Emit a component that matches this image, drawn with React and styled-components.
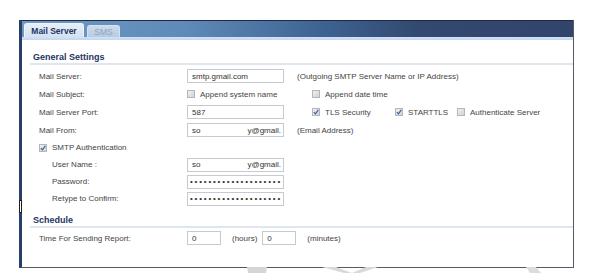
import React from "react";
import styled, { createGlobalStyle } from "styled-components";

const GlobalStyle = createGlobalStyle`
  html, body {
    margin: 0;
    padding: 0;
    background: #ffffff;
  }
  body {
    font-family: "Liberation Sans", Arial, sans-serif;
    font-size: 8px;
    color: #444444;
  }
`;

const Page = styled.div`
  width: 589px;
  height: 273px;
  padding: 20px 0 0 19px;
  box-sizing: border-box;
  position: relative;
  overflow: hidden;
`;

const Panel = styled.div`
  position: relative;
  width: 555px;
  height: 248px;
  box-sizing: border-box;
  border-left: 3px solid #273f69;
  border-right: 1px solid #555b66;
  border-bottom: 1px solid #555b66;
  background: #ffffff;
`;

const Splitter = styled.div`
  position: absolute;
  left: -3px;
  top: 180px;
  width: 1px;
  height: 11px;
  border: 1px solid #1c1c1c;
  background: #ffffff;
`;

const TabBar = styled.div`
  height: 17px;
  box-sizing: border-box;
  border-top: 1px solid #1c2a45;
  background: linear-gradient(90deg, #6f98c4 0%, #5f89b8 30%, #3d6292 55%, #33496f 72%, #33446c 100%);
  display: flex;
  align-items: flex-end;
  padding-left: 2px;
  gap: 3px;
`;

const Tab = styled.div`
  box-sizing: border-box;
  height: ${(p) => (p.$active ? "14px" : "12px")};
  width: ${(p) => p.$w}px;
  border-radius: 3px 3px 0 0;
  border: 1px solid ${(p) => (p.$active ? "#eef4fb" : "#d6e2ef")};
  border-bottom: none;
  background: ${(p) =>
    p.$active
      ? "linear-gradient(180deg, #e6eef8 0%, #d3e2f3 100%)"
      : "linear-gradient(180deg, #cddbeb 0%, #b6cbe3 100%)"};
  color: ${(p) => (p.$active ? "#1d3460" : "#8fa3bd")};
  font-weight: ${(p) => (p.$active ? "bold" : "normal")};
  font-size: 8.5px;
  display: flex;
  align-items: center;
  justify-content: center;
`;

const Strip = styled.div`
  height: 3px;
  background: linear-gradient(180deg, #d3e2f3 0%, #c3d6ee 100%);
`;

const Content = styled.div`
  padding: 11px 0 0 8px;
`;

const SectionTitle = styled.div`
  height: 12px;
  line-height: 12px;
  padding-left: 3px;
  font-weight: bold;
  color: #1f3562;
  font-size: 9px;
  border-bottom: 2px solid #dfe6ef;
  margin-top: ${(p) => p.$top || 0}px;
  margin-bottom: ${(p) => p.$bottom || 2}px;
`;

const Row = styled.div`
  height: ${(p) => p.$h || 18}px;
  display: flex;
  align-items: center;
  padding-left: ${(p) => (p.$sub ? 22 : 9)}px;
`;

const Label = styled.div`
  width: ${(p) => (p.$sub ? 135 : 148)}px;
  flex-shrink: 0;
  white-space: nowrap;
`;

const Input = styled.div`
  box-sizing: border-box;
  width: ${(p) => p.$w || 97}px;
  height: 14px;
  margin-left: ${(p) => p.$ml || 0}px;
  border: 1px solid #c6c9cd;
  background: #fff;
  padding-left: ${(p) => (p.$dots ? 2 : 4)}px;
  display: flex;
  align-items: center;
  justify-content: ${(p) => (p.$spread ? "space-between" : "flex-start")};
  padding-right: ${(p) => (p.$spread ? "2px" : "0")};
  white-space: nowrap;
  overflow: hidden;
  color: #333;
  letter-spacing: ${(p) => (p.$dots ? "1.8px" : "0")};
`;

const Note = styled.span`
  margin-left: ${(p) => p.$ml}px;
  white-space: nowrap;
`;

const Check = styled.span`
  display: inline-flex;
  align-items: center;
  flex-shrink: 0;
  width: ${(p) => (p.$w ? `${p.$w}px` : "auto")};
  margin-left: ${(p) => p.$ml || 0}px;
  white-space: nowrap;
`;

const Box = styled.span`
  box-sizing: border-box;
  width: 8px;
  height: 8px;
  margin-right: 5px;
  border: 1px solid #b3b6ba;
  background: linear-gradient(135deg, #f2f2f2 0%, #cfd1d4 100%);
  display: inline-flex;
  align-items: center;
  justify-content: center;
`;

const Watermark = styled.svg`
  position: absolute;
  left: 0;
  bottom: 0;
`;

function CheckBox({ checked, label, ml, w }) {
  return (
    <Check $ml={ml} $w={w}>
      <Box>
        {checked && (
          <svg width="6" height="6" viewBox="0 0 6 6">
            <path d="M0.8 3.2 L2.4 4.8 L5.3 0.9" stroke="#3c5fa6" strokeWidth="1.2" fill="none" />
          </svg>
        )}
      </Box>
      {label}
    </Check>
  );
}

const dots = "••••••••••••••••••••";

export default function App() {
  return (
    <>
      <GlobalStyle />
      <Page>
        <Panel>
          <Splitter />
          <TabBar>
            <Tab $active $w={60}>Mail Server</Tab>
            <Tab $w={33}>SMS</Tab>
          </TabBar>
          <Strip />
          <Content>
            <SectionTitle>General Settings</SectionTitle>
            <Row>
              <Label>Mail Server:</Label>
              <Input>smtp.gmail.com</Input>
              <Note $ml={13}>(Outgoing SMTP Server Name or IP Address)</Note>
            </Row>
            <Row>
              <Label>Mail Subject:</Label>
              <CheckBox label="Append system name" w={125} />
              <CheckBox label="Append date time" />
            </Row>
            <Row>
              <Label>Mail Server Port:</Label>
              <Input>587</Input>
              <CheckBox checked label="TLS Security" ml={28} w={83} />
              <CheckBox checked label="STARTTLS" w={62} />
              <CheckBox label="Authenticate Server" />
            </Row>
            <Row>
              <Label>Mail From:</Label>
              <Input $spread>
                <span>so</span>
                <span>y@gmail.</span>
              </Input>
              <Note $ml={13}>(Email Address)</Note>
            </Row>
            <Row $h={17}>
              <CheckBox checked label="SMTP Authentication" />
            </Row>
            <Row $h={17} $sub>
              <Label $sub>User Name :</Label>
              <Input $spread>
                <span>so</span>
                <span>y@gmail.</span>
              </Input>
            </Row>
            <Row $h={17} $sub>
              <Label $sub>Password:</Label>
              <Input $dots>{dots}</Input>
            </Row>
            <Row $h={17} $sub>
              <Label $sub>Retype to Confirm:</Label>
              <Input $dots>{dots}</Input>
            </Row>
            <SectionTitle $top={7} $bottom={1}>Schedule</SectionTitle>
            <Row>
              <Label>Time For Sending Report:</Label>
              <Input $w={34}>0</Input>
              <Note $ml={11}>(hours)</Note>
              <Input $w={34} $ml={5}>0</Input>
              <Note $ml={11}>(minutes)</Note>
            </Row>
          </Content>
        </Panel>
        <Watermark width="589" height="6" viewBox="0 0 589 6">
          <polygon points="247,0 267,0 266,6 248,6" fill="#d6d6d6" />
          <polygon points="322,0 336,0 352,6 366,0 378,0 360,6 344,6" fill="#d9d9d9" />
          <polygon points="526,0 536,0 541,6 530,6" fill="#dcdcdc" />
        </Watermark>
      </Page>
    </>
  );
}
